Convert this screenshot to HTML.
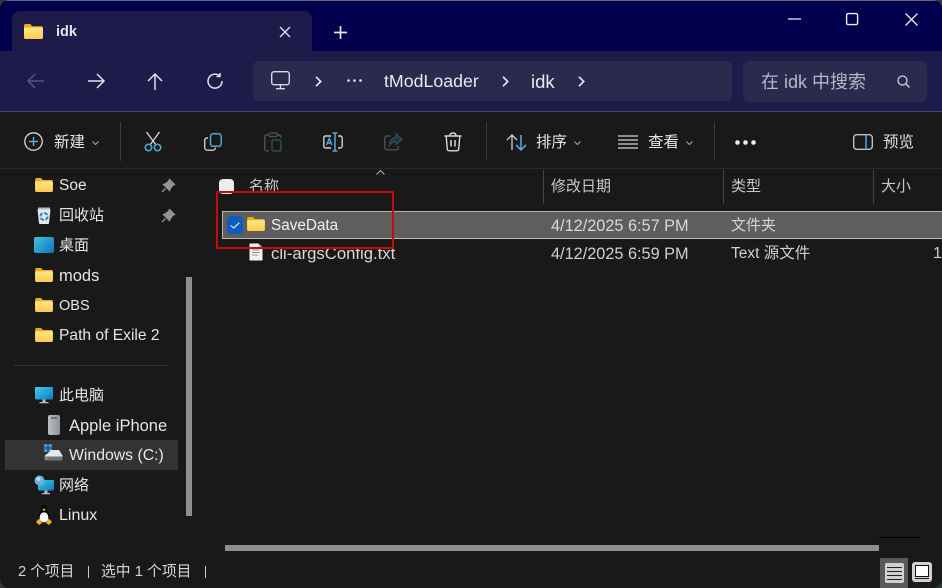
<!DOCTYPE html>
<html><head><meta charset="utf-8"><style>
html,body{margin:0;padding:0;width:942px;height:588px;overflow:hidden;background:#2d3b40}
#w{position:absolute;left:0;top:0;width:942px;height:588px;background:#191919;border-radius:9px;overflow:hidden;font-family:"Liberation Sans","Noto Sans CJK SC",sans-serif;color:#e8e8e8}
.a{position:absolute}
.t{position:absolute;white-space:nowrap;font-size:15px;line-height:20px;height:20px}
svg{position:absolute;overflow:visible}
.hd{color:#c8c8c8;font-size:15px}
.sep{position:absolute;width:1px;background:#3a3a3a}
.ln{position:absolute;width:1px;top:170px;height:34px;background:#444}
</style></head><body><div id="w">
<svg width="0" height="0" style="position:absolute"><defs>
<linearGradient id="fg" x1="0" y1="0" x2="0" y2="1"><stop offset="0" stop-color="#ffe88a"/><stop offset="1" stop-color="#fcc84a"/></linearGradient>
<linearGradient id="mg" x1="0" y1="0" x2="1" y2="1"><stop offset="0" stop-color="#3cd0e0"/><stop offset="1" stop-color="#0f78c8"/></linearGradient>
<symbol id="folder" viewBox="0 0 19 15"><path d="M0 2C0 .8.6 0 1.600 0h4.600l2.200 2.200h9c.9 0 1.600.7 1.600 1.600v9.600c0 .9-.7 1.600-1.600 1.600H1.600C.7 15 0 14.300 0 13.400Z" fill="#f0a818"/><path d="M0 5c0-.8.6-1.500 1.500-1.500h16c.9 0 1.500.7 1.500 1.500v8.400c0 .9-.7 1.600-1.600 1.600H1.600C.7 15 0 14.300 0 13.400Z" fill="url(#fg)"/></symbol>
</defs></svg>

<!-- title bar -->
<div class="a" style="left:0;top:0;width:942px;height:51px;background:#03004e"></div>
<div class="a" style="left:0;top:0;width:942px;height:1px;background:#5a6a78"></div>
<!-- tab -->
<div class="a" style="left:12px;top:11px;width:300px;height:41px;background:#1e1b4b;border-radius:8px 8px 0 0"></div>
<svg style="left:24px;top:24px" width="19" height="15"><use href="#folder" width="19" height="15"/></svg>
<div class="t" style="left:56px;top:22px;font-weight:bold;font-size:14.500px;color:#e6e6ee">idk</div>
<svg style="left:279px;top:26px" width="12" height="12"><path d="M1 1L11 11M11 1L1 11" stroke="#e0e0e8" stroke-width="1.300" fill="none"/></svg>
<svg style="left:334px;top:26px" width="13" height="13"><path d="M6.500 0V13M0 6.500H13" stroke="#e4e4ec" stroke-width="1.700" fill="none"/></svg>
<!-- window controls -->
<svg style="left:788px;top:18px" width="13" height="2"><path d="M0 1H13" stroke="#e6e6ee" stroke-width="1.300"/></svg>
<svg style="left:846px;top:13px" width="12" height="12"><rect x=".6" y=".6" width="11" height="11" rx="1.500" stroke="#eee" stroke-width="1.400" fill="none"/></svg>
<svg style="left:905px;top:13px" width="13" height="13"><path d="M.5 .5L12.500 12.500M12.500 .5L.5 12.500" stroke="#eee" stroke-width="1.300" fill="none"/></svg>

<!-- nav bar -->
<div class="a" style="left:0;top:51px;width:942px;height:60px;background:#1e1b4b"></div>
<div class="a" style="left:0;top:111px;width:942px;height:1px;background:#4a4868"></div>
<svg style="left:27px;top:73px" width="18" height="16"><path d="M17 8H1M8 1L1 8L8 15" stroke="#56547a" stroke-width="1.500" fill="none"/></svg>
<svg style="left:87px;top:73px" width="18" height="16"><path d="M1 8H17M10 1L17 8L10 15" stroke="#e0e0e8" stroke-width="1.500" fill="none"/></svg>
<svg style="left:147px;top:73px" width="16" height="18"><path d="M8 17V1M1 8L8 1L15 8" stroke="#e0e0e8" stroke-width="1.500" fill="none"/></svg>
<svg style="left:207px;top:73px" width="16" height="16"><path d="M12.500 2.800A7 7 0 1 0 15 8" stroke="#e0e0e8" stroke-width="1.500" fill="none"/><path d="M13 0V3.500H9.500" stroke="#e0e0e8" stroke-width="1.500" fill="none"/></svg>
<!-- address -->
<div class="a" style="left:253px;top:61px;width:479px;height:40px;background:#2c294f;border-radius:6px"></div>
<svg style="left:271px;top:71px" width="19" height="19"><rect x=".7" y=".7" width="17.600" height="13" rx="2.500" stroke="#d8d8e2" stroke-width="1.400" fill="none"/><path d="M9.500 14V17.500M5 17.700H14" stroke="#d8d8e2" stroke-width="1.400" fill="none"/></svg>
<svg style="left:315px;top:76px" width="7" height="11"><path d="M1 .8L5.700 5.500L1 10.200" stroke="#e6e6ee" stroke-width="1.700" fill="none"/></svg>
<svg style="left:347px;top:79px" width="15" height="3"><circle cx="1.500" cy="1.500" r="1.300" fill="#e6e6ee"/><circle cx="7.500" cy="1.500" r="1.300" fill="#e6e6ee"/><circle cx="13.500" cy="1.500" r="1.300" fill="#e6e6ee"/></svg>
<div class="t" style="left:384px;top:71px;font-size:17.750px;color:#e8e8f0">tModLoader</div>
<svg style="left:502px;top:76px" width="7" height="11"><path d="M1 .8L5.700 5.500L1 10.200" stroke="#e6e6ee" stroke-width="1.700" fill="none"/></svg>
<div class="t" style="left:531px;top:72px;font-size:18.500px;color:#e8e8f0">idk</div>
<svg style="left:578px;top:76px" width="7" height="11"><path d="M1 .8L5.700 5.500L1 10.200" stroke="#e6e6ee" stroke-width="1.700" fill="none"/></svg>
<!-- search -->
<div class="a" style="left:743px;top:61px;width:184px;height:41px;background:#2c294f;border-radius:6px"></div>
<div class="t" style="left:761px;top:72px;font-size:18px;color:#b8b6c6">在 idk 中搜索</div>
<svg style="left:897px;top:75px" width="13" height="13"><circle cx="5.500" cy="5.500" r="4.500" stroke="#d0d0da" stroke-width="1.300" fill="none"/><path d="M8.800 8.800L12.500 12.500" stroke="#d0d0da" stroke-width="1.400"/></svg>

<!-- toolbar -->
<svg style="left:24px;top:132px" width="19" height="19"><circle cx="9.500" cy="9.500" r="8.700" stroke="#d8d8d8" stroke-width="1.300" fill="none"/><path d="M9.500 5V14M5 9.500H14" stroke="#4fb0dc" stroke-width="1.400" fill="none"/></svg>
<div class="t" style="left:54px;top:133px;font-size:15.500px;color:#e4e4e4">新建</div>
<svg style="left:92px;top:141px" width="7" height="4"><path d="M.5 .5L3.500 3.500L6.500 .5" stroke="#aaa" stroke-width="1" fill="none"/></svg>
<div class="sep" style="left:120px;top:122px;height:39px"></div>
<!-- cut -->
<svg style="left:144px;top:131px" width="18" height="21"><path d="M2.500 1L12 14M15.500 1L6 14" stroke="#d8d8d8" stroke-width="1.300" fill="none"/><circle cx="4.500" cy="16.500" r="3.200" stroke="#4fa8d8" stroke-width="1.600" fill="none"/><circle cx="13.500" cy="16.500" r="3.200" stroke="#4fa8d8" stroke-width="1.600" fill="none"/></svg>
<!-- copy -->
<svg style="left:204px;top:133px" width="18" height="18"><path d="M4 5H3C1.700 5 .7 6 .7 7.300V14.500C.7 16 1.900 17.200 3.400 17.200H9C10.300 17.200 11.300 16.200 11.300 15V14.600" stroke="#d0d0d0" stroke-width="1.400" fill="none"/><rect x="6.500" y=".8" width="10.700" height="12.500" rx="2.500" stroke="#4fa8d8" stroke-width="1.500" fill="none"/></svg>
<!-- paste -->
<svg style="left:264px;top:132px" width="18" height="20"><path d="M4 3H2.500C1.400 3 .7 3.800 .7 4.800V17C.7 18.100 1.500 18.800 2.500 18.800H5M13 3H15C16 3 16.800 3.800 16.800 4.800V6" stroke="#505050" stroke-width="1.400" fill="none"/><rect x="5" y="1" width="8" height="3.500" rx="1" stroke="#505050" stroke-width="1.300" fill="none"/><rect x="8" y="8" width="9" height="11" rx="1.500" stroke="#2c4a58" stroke-width="1.500" fill="none"/></svg>
<!-- rename -->
<svg style="left:323px;top:132px" width="20" height="20"><path d="M8 4H3C1.600 4 .8 4.800 .8 6V14C.8 15.200 1.600 16 3 16H8M15 4H17C18.200 4 19.200 4.800 19.200 6V14C19.200 15.200 18.200 16 17 16H15" stroke="#d0d0d0" stroke-width="1.400" fill="none"/><path d="M12 1V19M9.500 1H14.500M9.500 19H14.500" stroke="#4fa8d8" stroke-width="1.500" fill="none"/><path d="M3.500 13L6.300 6.500L9 13M4.700 11H8" stroke="#4fa8d8" stroke-width="1.400" fill="none"/></svg>
<!-- share -->
<svg style="left:384px;top:133px" width="19" height="18"><path d="M7 3H3C1.700 3 .8 4 .8 5.200V14.500C.8 15.800 1.700 16.800 3 16.800H12C13.500 16.800 14.300 15.800 14.300 14.500V13" stroke="#505050" stroke-width="1.400" fill="none"/><path d="M12 1L18 6.500L12 11.500V8.500C9 8.500 7 10 5.500 12.500C5.500 8 8 4.500 12 4.300Z" stroke="#2c4a58" stroke-width="1.500" fill="#223540"/></svg>
<!-- delete -->
<svg style="left:444px;top:132px" width="18" height="20"><path d="M.5 4H17.500M6 4C6 2 7 1 9 1S12 2 12 4" stroke="#d8d8d8" stroke-width="1.400" fill="none"/><path d="M2.200 4L3.200 16.500C3.300 18 4.300 18.800 5.500 18.800H12.500C13.700 18.800 14.700 18 14.800 16.500L15.800 4" stroke="#d8d8d8" stroke-width="1.400" fill="none"/><path d="M7 8V14.500M11 8V14.500" stroke="#d8d8d8" stroke-width="1.500"/></svg>
<div class="sep" style="left:486px;top:122px;height:39px"></div>
<!-- sort -->
<svg style="left:506px;top:134px" width="21" height="17"><path d="M6 16V1M1 6L6 1L11 6" stroke="#d0d0d0" stroke-width="1.300" fill="none"/><path d="M15 1V16M10 11L15 16L20 11" stroke="#4fa8d8" stroke-width="1.600" fill="none"/></svg>
<div class="t" style="left:536px;top:133px;font-size:15.500px;color:#e4e4e4">排序</div>
<svg style="left:574px;top:141px" width="7" height="4"><path d="M.5 .5L3.500 3.500L6.500 .5" stroke="#aaa" stroke-width="1" fill="none"/></svg>
<!-- view -->
<svg style="left:618px;top:135px" width="20" height="14"><path d="M0 1H20M0 5H20M0 9H20M0 13H20" stroke="#d4d4d4" stroke-width="1.200"/></svg>
<div class="t" style="left:648px;top:133px;font-size:15.500px;color:#e4e4e4">查看</div>
<svg style="left:686px;top:141px" width="7" height="4"><path d="M.5 .5L3.500 3.500L6.500 .5" stroke="#aaa" stroke-width="1" fill="none"/></svg>
<div class="sep" style="left:714px;top:122px;height:39px"></div>
<svg style="left:735px;top:140px" width="21" height="5"><circle cx="2.500" cy="2.500" r="2.300" fill="#f2f2f2"/><circle cx="10.500" cy="2.500" r="2.300" fill="#f2f2f2"/><circle cx="18.500" cy="2.500" r="2.300" fill="#f2f2f2"/></svg>
<!-- preview -->
<svg style="left:853px;top:134px" width="20" height="16"><rect x=".7" y=".7" width="18.600" height="14.600" rx="3" stroke="#c0c0c0" stroke-width="1.400" fill="none"/><path d="M13 1V15.500" stroke="#4fa8d8" stroke-width="1.500"/></svg>
<div class="t" style="left:883px;top:133px;font-size:15.500px;color:#e4e4e4">预览</div>
<div class="a" style="left:0;top:168px;width:942px;height:1px;background:#2b2b2b"></div>

<!-- sidebar -->
<svg style="left:35px;top:178px" width="18" height="14"><use href="#folder" width="18" height="14"/></svg>
<div class="t" style="left:59px;top:176px;font-size:15.500px;color:#e6e6e6">Soe</div>
<svg style="left:161px;top:179px" width="14" height="14"><path d="M8.500 .5L13.500 5.500L11.500 6.500L9 10L8.500 11.500L2.500 5.500L4 5L7.500 2.500Z M4.500 9.500L1 13" fill="#909498" stroke="#909498" stroke-width="1.300"/></svg>
<svg style="left:37px;top:206px" width="14" height="18"><path d="M.5 3.500H13.500L12 17C12 17.500 11.500 18 11 18H3C2.500 18 2 17.500 2 17Z" fill="#e8e8ea"/><path d="M1 1.500H13V3.500H1Z" fill="#b8bcc0"/><circle cx="7" cy="10.500" r="3.500" fill="none" stroke="#2a88d8" stroke-width="2" stroke-dasharray="4 1.500"/></svg>
<div class="t" style="left:59px;top:206px;color:#e6e6e6">回收站</div>
<svg style="left:161px;top:209px" width="14" height="14"><path d="M8.500 .5L13.500 5.500L11.500 6.500L9 10L8.500 11.500L2.500 5.500L4 5L7.500 2.500Z M4.500 9.500L1 13" fill="#909498" stroke="#909498" stroke-width="1.300"/></svg>
<div class="a" style="left:34px;top:237px;width:20px;height:16px;border-radius:2px;background:linear-gradient(135deg,#3cc8d8,#1070c8)"></div>
<div class="t" style="left:59px;top:236px;color:#e6e6e6">桌面</div>
<svg style="left:35px;top:268px" width="18" height="14"><use href="#folder" width="18" height="14"/></svg>
<div class="t" style="left:59px;top:266px;font-size:16.500px;color:#e6e6e6">mods</div>
<svg style="left:35px;top:298px" width="18" height="14"><use href="#folder" width="18" height="14"/></svg>
<div class="t" style="left:59px;top:296px;font-size:14.500px;color:#e6e6e6">OBS</div>
<svg style="left:35px;top:328px" width="18" height="14"><use href="#folder" width="18" height="14"/></svg>
<div class="t" style="left:59px;top:326px;font-size:15.600px;color:#e6e6e6">Path of Exile 2</div>
<div class="a" style="left:14px;top:365px;width:154px;height:1px;background:#333"></div>
<svg style="left:35px;top:387px" width="18" height="17"><rect x="0" y="0" width="18" height="12.500" rx="1" fill="url(#mg)"/><path d="M7.500 12.500H10.500V15H7.500ZM4.500 15H13.500V16.200H4.500Z" fill="#b8c0c8"/></svg>
<div class="t" style="left:59px;top:386px;color:#e6e6e6">此电脑</div>
<div class="a" style="left:48px;top:415px;width:12px;height:20px;background:linear-gradient(90deg,#b8c0c4,#8c9498);border-radius:2px"></div>
<div class="a" style="left:51px;top:417px;width:6px;height:2px;background:#707478"></div>
<div class="t" style="left:69px;top:416px;font-size:16.500px;color:#e6e6e6">Apple iPhone</div>
<div class="a" style="left:5px;top:440px;width:173px;height:30px;background:#333"></div>
<svg style="left:44px;top:444px" width="19" height="19"><path d="M0 0H3.500V3.500H0ZM4.500 0H8V3.500H4.500ZM0 4.500H3.500V8H0ZM4.500 4.500H8V8H4.500Z" fill="#3a94d8"/><path d="M4 9L7 6H15L18.500 11.500V15C18.500 16 18 16.500 17 16.500H2C1 16.500.5 16 .5 15V12Z" fill="#e6e8e8"/><path d="M.5 12.500H18.500V15.500C18.500 16 18 16.500 17.500 16.500H1.500C1 16.500.5 16 .5 15.500Z" fill="#6c7478"/><rect x="2.500" y="14" width="2" height="1" fill="#60e060"/></svg>
<div class="t" style="left:69px;top:446px;font-size:15.800px;color:#e6e6e6">Windows (C:)</div>
<svg style="left:34px;top:475px" width="20" height="20"><rect x="4" y="5" width="16" height="10.500" rx="1" fill="url(#mg)"/><path d="M10.500 15.500H13.500V18H10.500ZM8 18H16V19.200H8Z" fill="#b8c0c8"/><circle cx="5.500" cy="5.500" r="5" fill="#6cb0d8"/><circle cx="4.500" cy="4" r="2" fill="#b8dcec"/></svg>
<div class="t" style="left:59px;top:476px;color:#e6e6e6">网络</div>
<svg style="left:36px;top:505px" width="16" height="20"><path d="M8 0C5.500 0 5 2.200 5 4.500C5 6.500 2 9 2 14H14C14 9 11 6.500 11 4.500C11 2.200 10.500 0 8 0Z" fill="#050505"/><path d="M4.200 10C3 13 3.500 17 8 17.500C12.500 17 13 13 11.800 10C10.500 6.500 5.500 6.500 4.200 10Z" fill="#f6f6f6"/><path d="M6.300 4.500L8 3.500L9.700 4.500L8 6.200Z" fill="#f0b020"/><path d="M0 17L3 13.500L6 18L3 20ZM16 17L13 13.500L10 18L13 20Z" fill="#f0b020"/></svg>
<div class="t" style="left:59px;top:506px;font-size:16px;color:#e6e6e6">Linux</div>
<!-- sidebar scrollbar -->
<div class="a" style="left:186px;top:277px;width:6px;height:239px;background:#8e8e8e"></div>

<!-- header -->
<div class="ln" style="left:543px"></div>
<div class="ln" style="left:723px"></div>
<div class="ln" style="left:873px"></div>
<div class="a" style="left:219px;top:179px;width:15px;height:15px;background:#ececec;border-radius:4px"></div>
<svg style="left:376px;top:170px" width="9" height="5"><path d="M.5 4.500L4.500 .5L8.500 4.500" stroke="#b0b0b0" stroke-width="1" fill="none"/></svg>
<div class="t hd" style="left:249px;top:177px">名称</div>
<div class="t hd" style="left:551px;top:177px">修改日期</div>
<div class="t hd" style="left:731px;top:177px">类型</div>
<div class="t hd" style="left:881px;top:177px">大小</div>

<!-- rows -->
<div class="a" style="left:222px;top:211px;width:720px;height:26px;background:#5e5e5e;border:solid #b8b8b8;border-width:1px 0 1px 1px"></div>
<div class="a" style="left:227px;top:216px;width:16px;height:18px;background:#0b5cc0;border-radius:4px"></div>
<svg style="left:230px;top:222px" width="10" height="7"><path d="M.7 3.500L3.700 6L9.300 .7" stroke="#f0f0f0" stroke-width="1.100" fill="none"/></svg>
<svg style="left:247px;top:217px" width="18" height="14"><use href="#folder" width="18" height="14"/></svg>
<div class="t" style="left:271px;top:216px;font-size:15.300px;color:#f0f0f0">SaveData</div>
<div class="t" style="left:551px;top:216px;font-size:16.300px;color:#d8d8d8">4/12/2025 6:57 PM</div>
<div class="t" style="left:731px;top:216px;font-size:15px;color:#d4d4d4">文件夹</div>
<svg style="left:249px;top:243px" width="14" height="18"><path d="M.5 .5H9.500L13.500 4.500V17.500H.5Z" fill="#f2f2f2"/><path d="M9.500 .5V4.500H13.500" fill="#bdbdbd"/><path d="M3 7H10M3 9.500H11M3 12H9" stroke="#909090" stroke-width="1"/></svg>
<div class="t" style="left:271px;top:244px;font-size:16.700px;color:#d8d8d8">cli-argsConfig.txt</div>
<div class="t" style="left:551px;top:244px;font-size:16.300px;color:#d0d0d0">4/12/2025 6:59 PM</div>
<div class="t" style="left:731px;top:244px;color:#d0d0d0;font-size:15.500px">Text 源文件</div>
<div class="t" style="left:933px;top:244px;font-size:16px;color:#d0d0d0">1</div>

<!-- red box -->
<div class="a" style="left:216px;top:191px;width:174px;height:54px;border:2px solid #c80a0a;border-radius:1px"></div>

<!-- h scrollbar -->
<div class="a" style="left:225px;top:545px;width:654px;height:6px;background:#8e8e8e"></div>
<div class="a" style="left:879px;top:537px;width:41px;height:1px;background:#000"></div>

<!-- status -->
<div class="t" style="left:18px;top:562px;font-size:14.700px;color:#d4d4d4">2 个项目</div>
<div class="a" style="left:88px;top:566px;width:1px;height:12px;background:#c8c8c8"></div>
<div class="t" style="left:101px;top:562px;font-size:14.800px;color:#d4d4d4">选中 1 个项目</div>
<div class="a" style="left:205px;top:566px;width:1px;height:12px;background:#c8c8c8"></div>
<div class="a" style="left:880px;top:558px;width:28px;height:30px;background:#5a5a5a"></div>
<div class="a" style="left:885px;top:563px;width:19px;height:20px;background:#d0d0d0;border-radius:2px"></div>
<svg style="left:887px;top:567px" width="15" height="13"><path d="M0 .5H15M0 4.500H15M0 8.500H15M0 12.500H15" stroke="#222" stroke-width="1"/></svg>
<div class="a" style="left:912px;top:562px;width:20px;height:20px;background:#d0d0d0;border-radius:3px"></div>
<div class="a" style="left:915px;top:565px;width:12px;height:10px;background:#fff;border:1px solid #111"></div>
<div class="a" style="left:915px;top:578px;width:14px;height:1px;background:#222"></div>
</div></body></html>
